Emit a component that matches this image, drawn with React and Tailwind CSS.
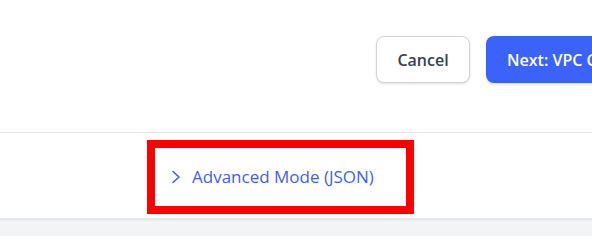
import React from 'react';

const ChevronRight = () => (
  <svg width="10" height="16" viewBox="0 0 10 16" fill="none" className="shrink-0">
    <path d="M2 2.5l6 5.5-6 5.5" stroke="currentColor" strokeWidth="1.6" strokeLinecap="round" strokeLinejoin="round" />
  </svg>
);

const App = () => {
  return (
    <div className="w-full h-[236px] overflow-hidden bg-[#f3f4f6]" style={{ fontFamily: '"Open Sans", "Noto Sans", sans-serif' }}>
      <div className="w-[800px]">
        {/* Footer actions */}
        <div className="h-[133px] bg-white border-b border-[#e5e7eb]">
          <div className="flex items-start gap-4 pl-[376px] pt-9">
            <button className="h-[47px] w-[94px] rounded-lg border border-[#d1d5db] bg-white text-[16px] font-semibold text-[#374151] shadow-sm">
              Cancel
            </button>
            <button className="h-[47px] rounded-lg bg-[#3b63fb] px-[21px] text-[16px] font-semibold text-white shadow-sm">
              Next: VPC Configuration
            </button>
          </div>
        </div>

        {/* Advanced mode toggle */}
        <div className="bg-white pt-[7px] pb-[4px] shadow-[0_1px_2px_rgba(0,0,0,0.08)] border-b border-[#e5e7eb]">
          <div className="pl-[147px]">
            <button className="flex h-[74px] w-[267px] items-center gap-[11px] border-8 border-[#ff0000] pl-[16px] text-[17px] text-[#3f5ff3]">
              <ChevronRight />
              <span>Advanced Mode (JSON)</span>
            </button>
          </div>
        </div>
      </div>
    </div>
  );
};

export default App;
